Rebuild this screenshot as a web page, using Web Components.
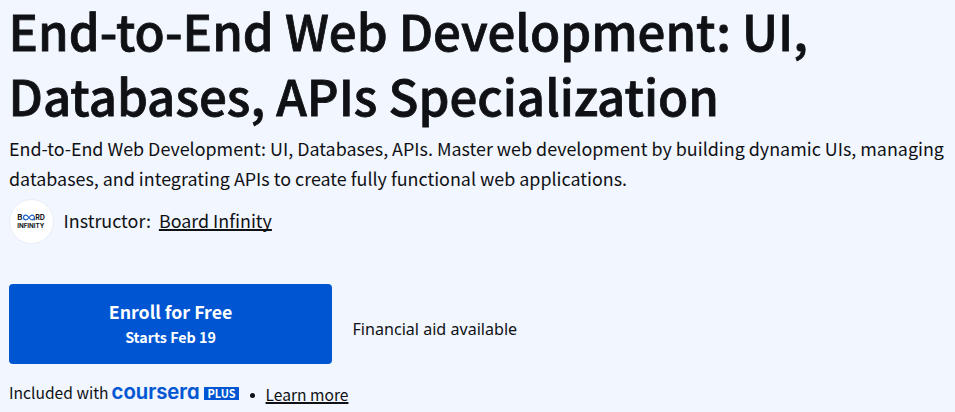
<!DOCTYPE html>
<html lang="en">
<head>
<meta charset="utf-8">
<title>End-to-End Web Development: UI, Databases, APIs Specialization</title>
<style>
  body {
    margin: 0;
    background: #f2f6ff;
    color: #0f1114;
    font-family: "Noto Sans CJK JP", "Noto Sans", sans-serif;
  }
</style>
</head>
<body>
<course-hero>
  <span slot="title">End-to-End Web Development: UI,<br>Databases, APIs Specialization</span>
  <span slot="summary">End-to-End Web Development: UI, Databases, APIs. Master web development by building dynamic UIs, managing<br>databases, and integrating APIs to create fully functional web applications.</span>
  <instructor-line slot="instructor">Board Infinity</instructor-line>
  <enroll-button slot="action">Enroll for Free<span slot="starts">Starts Feb 19</span></enroll-button>
  <span slot="aid">Financial aid available</span>
  <plus-note slot="note">Included with<text-link slot="more">Learn more</text-link></plus-note>
</course-hero>

<script>
const define = (name, html) => {
  customElements.define(name, class extends HTMLElement {
    constructor() {
      super();
      this.attachShadow({ mode: "open" }).innerHTML = html;
    }
  });
};

define("text-link", `
  <style>
    :host { display: inline-block; }
    a {
      color: inherit;
      text-decoration: underline;
      text-decoration-thickness: 2px;
      text-underline-offset: 1px;
      text-decoration-skip-ink: none;
      cursor: pointer;
    }
  </style>
  <a><slot></slot></a>
`);

define("partner-logo", `
  <style>
    :host {
      display: block;
      box-sizing: border-box;
      width: 45px;
      height: 45px;
      border: 1px solid #e8eef7;
      border-radius: 50%;
      background: #fff;
    }
    svg { display: block; }
    text { font: 700 7.2px Inter, sans-serif; fill: #15171c; }
  </style>
  <svg width="43" height="43" viewBox="0 0 43 43">
    <text x="7.2" y="20.2" textLength="5.2" lengthAdjust="spacingAndGlyphs">B</text>
    <path d="M18.8 17.5C17.8 15.8 16.9 15.1 15.9 15.1a2.4 2.4 0 0 0 0 4.8c2.6 0 3.7-4.8 6.2-4.8a2.3 2.4 0 0 1 2.3 2.4v2.7M24.4 17.5a2.3 2.4 0 0 1-2.3 2.4c-1.2 0-2-.9-2.7-1.9" fill="none" stroke="#1d62c4" stroke-width="1.2"/>
    <text x="25.2" y="20.2" textLength="9.7" lengthAdjust="spacingAndGlyphs">RD</text>
    <text x="7.2" y="27.6" textLength="27.2" lengthAdjust="spacingAndGlyphs" style="font-size: 6.3px">INFINITY</text>
  </svg>
`);

define("instructor-line", `
  <style>
    :host {
      display: flex;
      align-items: center;
      font-size: 17.9px;
      line-height: 30px;
      white-space: nowrap;
    }
    .label { margin: 0 8px 0 9.5px; }
    .label, text-link { margin-bottom: 3px; }
  </style>
  <partner-logo></partner-logo>
  <span class="label">Instructor:</span>
  <text-link><slot></slot></text-link>
`);

define("enroll-button", `
  <style>
    :host { display: block; }
    button {
      display: flex;
      flex-direction: column;
      align-items: center;
      justify-content: center;
      width: 323px;
      height: 80px;
      padding: 0 0 1px;
      border: 0;
      border-radius: 4px;
      background: #0056d2;
      color: #fff;
      font: 700 17.75px/26px "Noto Sans CJK JP", sans-serif;
    }
    .starts { font-size: 14.3px; line-height: 25px; }
  </style>
  <button>
    <span><slot></slot></span>
    <span class="starts"><slot name="starts"></slot></span>
  </button>
`);

define("coursera-plus", `
  <style>
    :host { display: block; }
    svg { display: block; overflow: visible; }
    .word {
      font: 600 20.5px Inter, sans-serif;
      /* single-storey a */
      font-feature-settings: "cv11";
      fill: #0056d2;
      stroke: #0056d2;
      stroke-width: .2px;
    }
    .plus { font: 700 12px "Noto Sans CJK JP", sans-serif; fill: #fff; }
  </style>
  <svg width="128" height="22" viewBox="0 0 128 22">
    <text class="word" x="-.4" y="18.3" textLength="88" lengthAdjust="spacingAndGlyphs">coursera</text>
    <rect x="92" y="6" width="35" height="13" rx=".6" fill="#0056d2"/>
    <text class="plus" x="95.5" y="17" textLength="28" lengthAdjust="spacingAndGlyphs">PLUS</text>
  </svg>
`);

define("plus-note", `
  <style>
    :host {
      display: flex;
      align-items: flex-start;
      font-size: 15.6px;
      line-height: 24px;
      white-space: nowrap;
    }
    coursera-plus { margin: 1px 0 0 3px; }
    .dot {
      width: 5px;
      height: 5px;
      margin: 13px 11px 0 10px;
      border-radius: 50%;
      background: #0f1114;
    }
    .more { margin-top: 2px; }
  </style>
  <span><slot></slot></span>
  <coursera-plus></coursera-plus>
  <span class="dot"></span>
  <span class="more"><slot name="more"></slot></span>
`);

define("course-hero", `
  <style>
    :host {
      display: flex;
      flex-direction: column;
      box-sizing: border-box;
      width: 955px;
      height: 412px;
      padding-left: 9px;
    }
    h1 {
      margin: -3px 0 0 -.5px;
      font-size: 49.2px;
      font-weight: 500;
      line-height: 65px;
      -webkit-text-stroke: .8px currentColor;
      white-space: nowrap;
    }
    p {
      margin: 6px 0 0;
      font-size: 17.9px;
      line-height: 30px;
      white-space: nowrap;
    }
    .instructor { margin-top: 6px; }
    .actions {
      display: flex;
      align-items: center;
      gap: 20.5px;
      margin-top: 40px;
    }
    .aid {
      margin-top: 9px;
      font: 16.1px/24px "Noto Sans", sans-serif;
    }
    .note { margin-top: 16px; }
  </style>
  <h1><slot name="title"></slot></h1>
  <p><slot name="summary"></slot></p>
  <div class="instructor"><slot name="instructor"></slot></div>
  <div class="actions">
    <slot name="action"></slot>
    <div class="aid"><slot name="aid"></slot></div>
  </div>
  <div class="note"><slot name="note"></slot></div>
`);
</script>
</body>
</html>
